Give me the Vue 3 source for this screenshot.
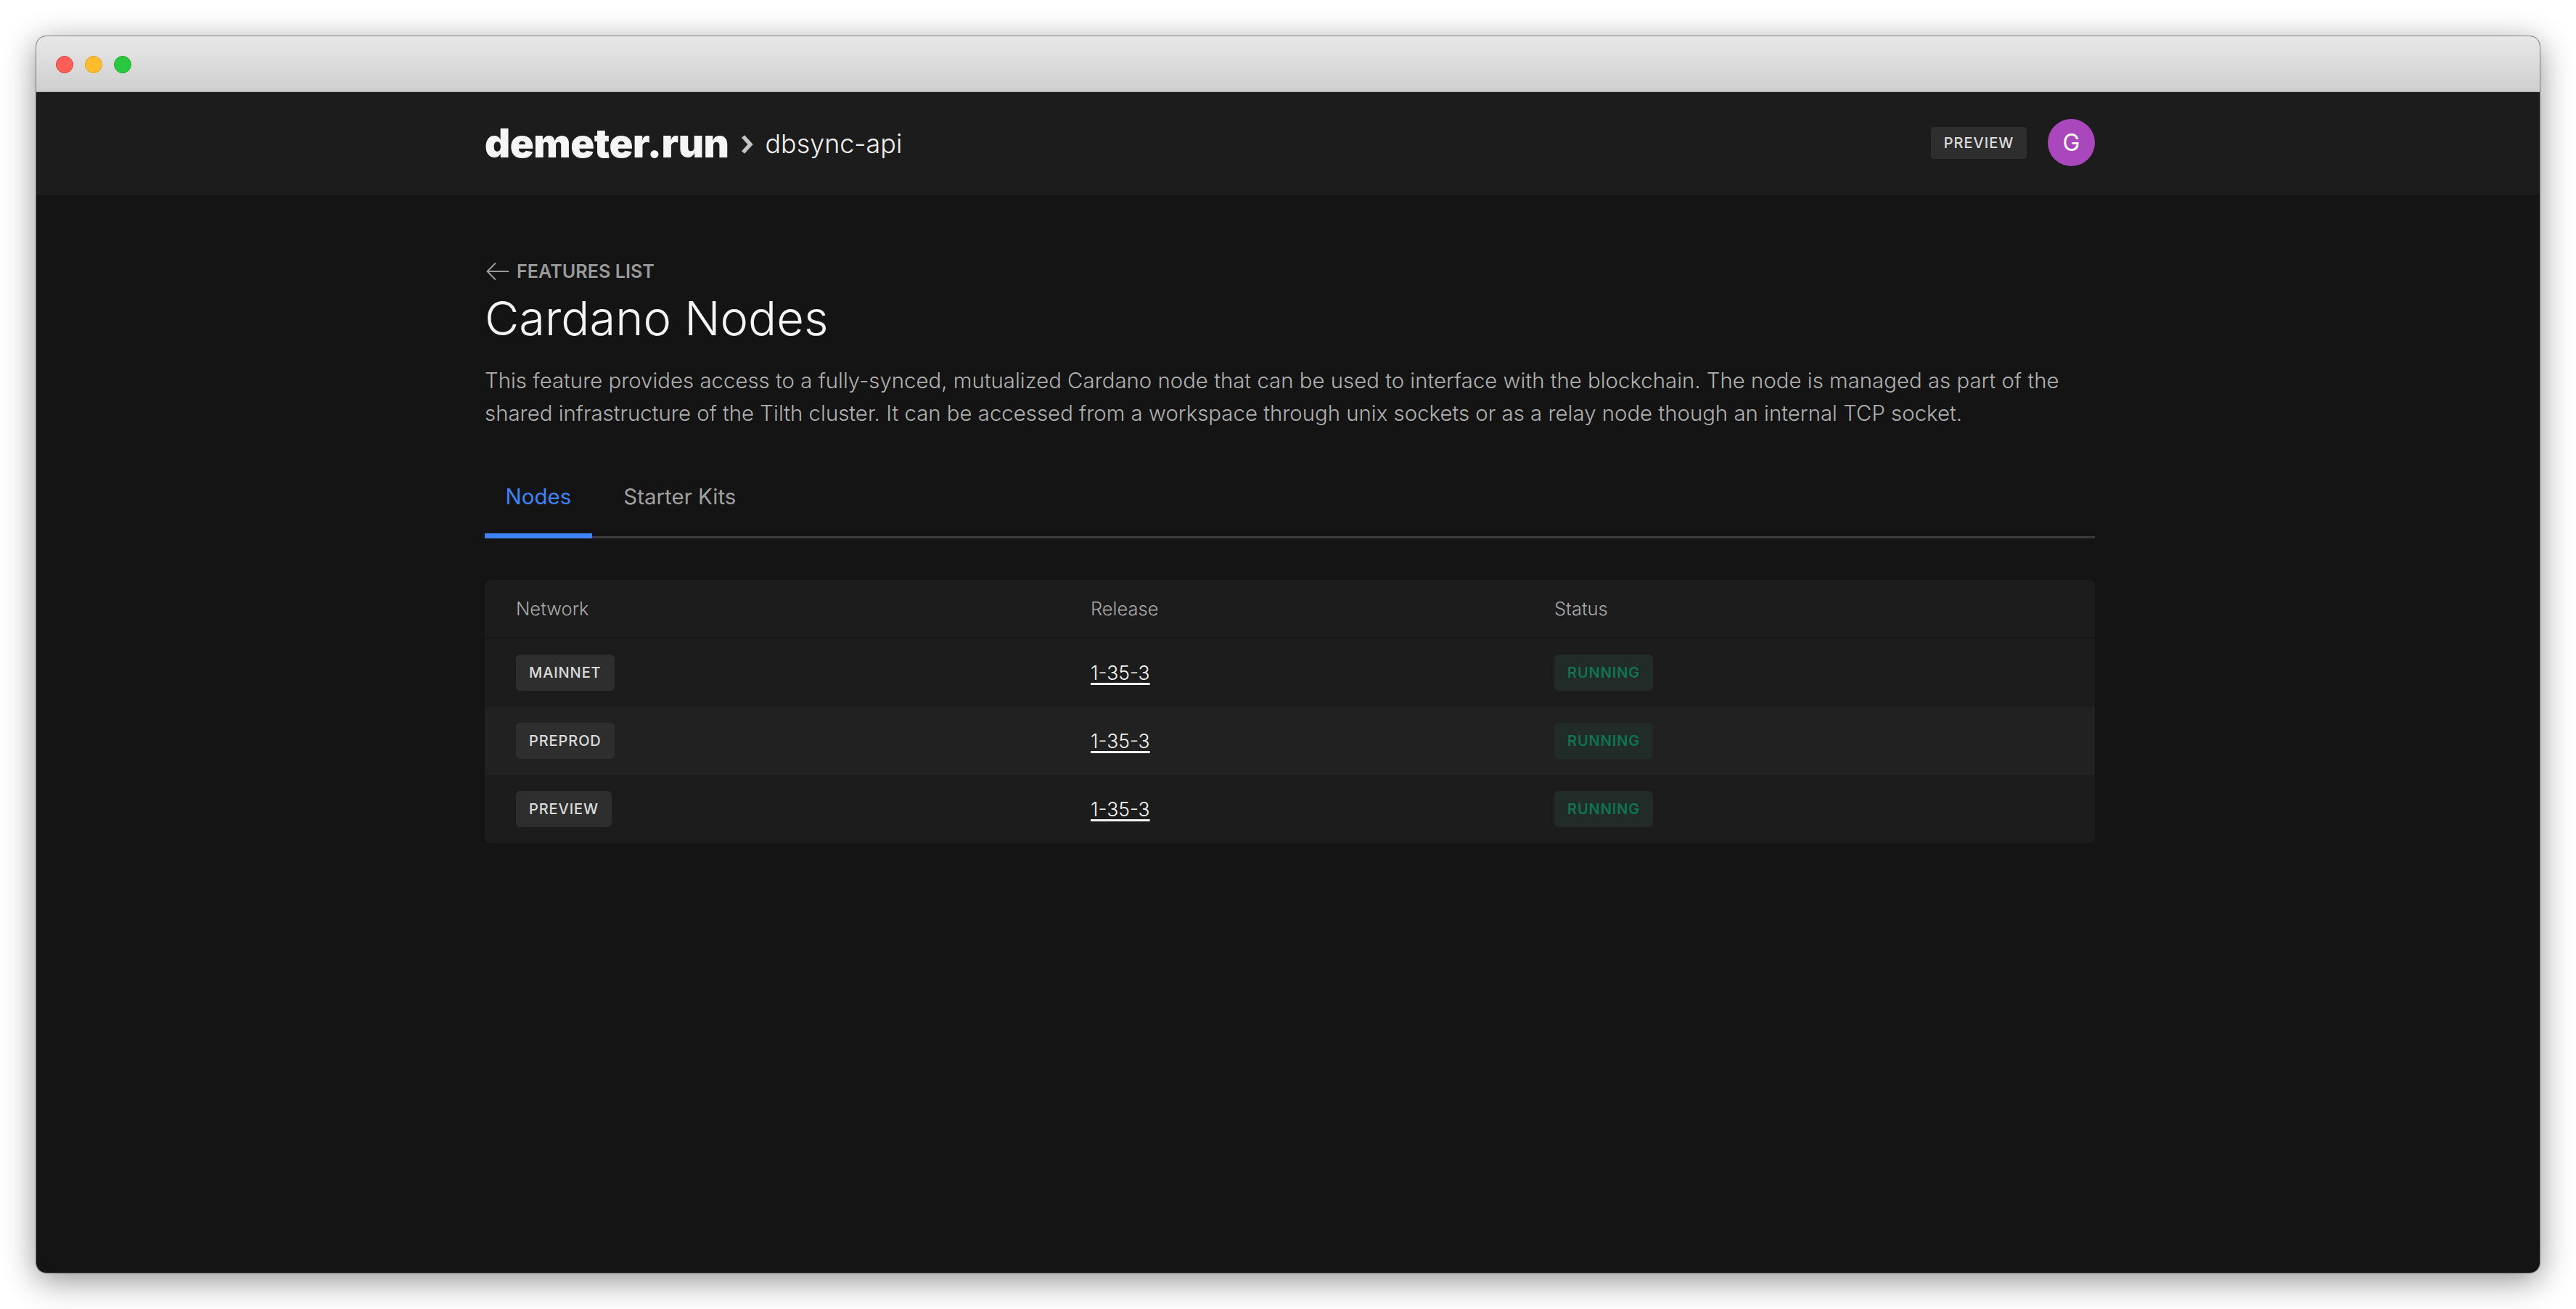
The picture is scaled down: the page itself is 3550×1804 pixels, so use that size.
<script setup>
const nodes = [
  { network: 'MAINNET', release: '1-35-3', status: 'RUNNING' },
  { network: 'PREPROD', release: '1-35-3', status: 'RUNNING' },
  { network: 'PREVIEW', release: '1-35-3', status: 'RUNNING' },
]
</script>

<template>
  <div class="page">
    <div class="window">
      <div class="titlebar">
        <span class="dot red"></span>
        <span class="dot yellow"></span>
        <span class="dot green"></span>
      </div>

      <header class="header">
        <div class="container header-inner">
          <div class="crumbs">
            <span class="logo">demeter.run</span>
            <svg class="chevron" width="17" height="26" viewBox="0 0 17 26" fill="none">
              <path d="M3 2 L13 13 L3 24" stroke="#c4c4c4" stroke-width="5.5" />
            </svg>
            <span class="project">dbsync-api</span>
          </div>
          <div class="account">
            <span class="env">PREVIEW</span>
            <span class="avatar">G</span>
          </div>
        </div>
      </header>

      <main class="container main">
        <a class="back">
          <svg width="32" height="26" viewBox="0 0 32 26" fill="none">
            <path d="M31 13 H2 M13 1.5 L1.5 13 L13 24.5" stroke="#9a9a9a" stroke-width="2" />
          </svg>
          <span>FEATURES LIST</span>
        </a>
        <h1 class="title">Cardano Nodes</h1>
        <p class="desc">
          This feature provides access to a fully-synced, mutualized Cardano node that can be used to interface with the blockchain. The node is managed as part of the
          shared infrastructure of the Tilth cluster. It can be accessed from a workspace through unix sockets or as a relay node though an internal TCP socket.
        </p>

        <nav class="tabs">
          <a class="tab active">Nodes</a>
          <a class="tab">Starter Kits</a>
        </nav>

        <div class="table">
          <div class="row head">
            <div>Network</div>
            <div>Release</div>
            <div>Status</div>
          </div>
          <div v-for="n in nodes" :key="n.network" class="row body">
            <div><span class="badge">{{ n.network }}</span></div>
            <div><a class="release">{{ n.release }}</a></div>
            <div><span class="badge running">{{ n.status }}</span></div>
          </div>
        </div>
      </main>
    </div>
  </div>
</template>

<style>
html, body {
  background: #fff;
}
</style>

<style scoped>
.page {
  width: 3550px;
  height: 1804px;
  padding: 50px;
  box-sizing: border-box;
  font-family: Inter, "Liberation Sans", sans-serif;
  overflow: hidden;
}

.window {
  height: 100%;
  display: flex;
  flex-direction: column;
  background: #141414;
  border-radius: 14px;
  overflow: hidden;
  box-shadow: 0 0 0 1px rgba(0, 0, 0, 0.4), 0 10px 45px rgba(0, 0, 0, 0.45);
}

.titlebar {
  height: 75px;
  flex: none;
  display: flex;
  align-items: center;
  gap: 16px;
  padding: 0 0 0 27px;
  background: linear-gradient(#e8e8e8, #cfcfcf);
  border-bottom: 2px solid #b9b9b9;
  box-sizing: content-box;
}

.dot {
  width: 24px;
  height: 24px;
  border-radius: 50%;
  box-sizing: border-box;
  margin-top: 2px;
}
.red { background: #ff5f57; border: 1px solid #e0443e; }
.yellow { background: #ffbd2e; border: 1px solid #dea123; }
.green { background: #28c840; border: 1px solid #1aab29; }

.container {
  width: 2219px;
  margin-left: 618px;
}

.header {
  height: 142px;
  flex: none;
  background: #1c1c1c;
}

.header-inner {
  height: 100%;
  display: flex;
  align-items: center;
  justify-content: space-between;
  padding-bottom: 3px;
  box-sizing: border-box;
}

.crumbs {
  display: flex;
  align-items: center;
}

.logo {
  font-size: 54.5px;
  font-weight: 900;
  color: #f5f5f5;
  letter-spacing: -0.5px;
}

.chevron {
  margin: 4px 16px 0 17px;
}

.project {
  font-size: 35.9px;
  font-weight: 300;
  color: #f0f0f0;
  margin-top: 2px;
}

.account {
  display: flex;
  align-items: center;
  gap: 29px;
}

.env {
  height: 44px;
  width: 132px;
  display: flex;
  align-items: center;
  justify-content: center;
  background: #2e2e2e;
  border-radius: 4px;
  color: #dcdcdc;
  font-size: 20px;
  font-weight: 500;
  letter-spacing: 1px;
}

.avatar {
  width: 65px;
  height: 65px;
  border-radius: 50%;
  background: #ab47bc;
  color: #fff;
  font-size: 32px;
  display: flex;
  align-items: center;
  justify-content: center;
}

.main {
  display: flex;
  flex-direction: column;
  padding-top: 90px;
}

.back {
  display: flex;
  align-items: center;
  gap: 10px;
  height: 30px;
  padding-left: 2px;
  color: #9a9a9a;
  font-size: 25.2px;
  font-weight: 600;
}

.title {
  margin: 10px 0 0;
  font-size: 65px;
  line-height: 80px;
  font-weight: 300;
  color: #f5f5f5;
}

.desc {
  margin: 23px 0 0;
  font-size: 29.38px;
  line-height: 45.3px;
  font-weight: 300;
  color: #b0b0b0;
  white-space: pre-line;
}

.tabs {
  display: flex;
  gap: 15px;
  margin-top: 40px;
  border-bottom: 3px solid #3c3c3c;
}

.tab {
  padding: 0 28.5px;
  height: 109px;
  display: flex;
  align-items: center;
  margin-bottom: -3px;
  border-bottom: 7px solid transparent;
  font-size: 29.5px;
  font-weight: 400;
  color: #a0a0a0;
  box-sizing: border-box;
}

.tab.active {
  color: #3f83f8;
  border-bottom-color: #3f83f8;
}

.table {
  margin-top: 57px;
  background: #1c1c1c;
  border-radius: 8px;
  overflow: hidden;
}

.row {
  display: grid;
  grid-template-columns: 792px 639px 1fr;
  align-items: center;
  padding-left: 43px;
}

.row > div {
  min-width: 0;
}

.head {
  height: 79px;
  border-bottom: 2px solid #151515;
  color: #a8a8a8;
  font-size: 25.5px;
  font-weight: 300;
  box-sizing: content-box;
}

.body {
  height: 94px;
  padding-top: 1px;
  box-sizing: border-box;
}

.body:nth-child(3) {
  background: #212121;
}

.badge {
  display: inline-flex;
  align-items: center;
  height: 50px;
  padding: 0 18px;
  background: #2e2e2e;
  border-radius: 6px;
  color: #dcdcdc;
  font-size: 20px;
  font-weight: 500;
  letter-spacing: 0.9px;
}

.badge.running {
  background: #212b28;
  color: #0f7452;
  font-weight: 600;
  letter-spacing: 0.9px;
}

.release {
  color: #f5f5f5;
  font-size: 26.5px;
  font-weight: 300;
  text-decoration: underline;
  text-decoration-thickness: 3px;
  text-underline-offset: 4px;
}
</style>
